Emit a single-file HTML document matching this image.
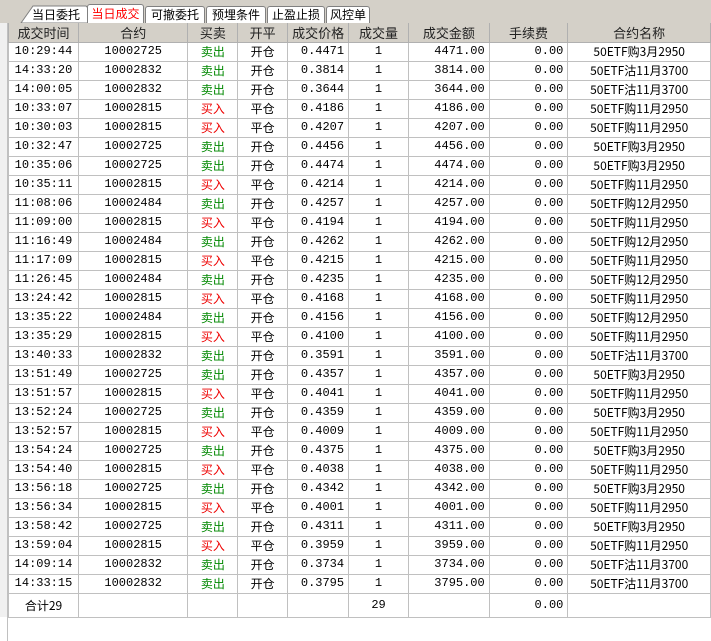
<!DOCTYPE html>
<html><head><meta charset="utf-8">
<style>
*{margin:0;padding:0;box-sizing:border-box}
body{width:711px;height:641px;overflow:hidden;background:#fff;position:relative;font-family:"Liberation Mono","Noto Sans CJK SC",monospace;font-size:12px;color:#000}
#top{position:absolute;left:0;top:0;width:711px;height:23px;background:#d4d0c8}
.tab{position:absolute;top:6px;height:17px;background:#fff;border:1px solid #808080;border-bottom:none;border-radius:3px 3px 0 0;font-family:"Noto Sans CJK SC",sans-serif;font-size:12px;line-height:15px;text-align:center}
.tab.act{top:4px;height:20px;color:#f00;line-height:18px}
#strip{position:absolute;left:0;top:23px;width:8px;height:594px;background:#f0f0f0;border-right:1px solid #c0c0c0}
#bl{position:absolute;left:7px;top:617px;width:1px;height:24px;background:#c0c0c0}
table{position:absolute;left:8px;top:23px;border-collapse:collapse;table-layout:fixed}
td,th{border:1px solid #c0c0c0;height:19px;padding:0 4px;white-space:nowrap;overflow:hidden;font-weight:normal;line-height:17px}
th{background:#d4d0c8;border-color:#b0b0b0;font-family:"Noto Sans CJK SC",sans-serif;font-size:13px;color:#222;text-align:center;border-top:none}
td{text-align:center}
td.r{text-align:right}
.g{color:#080;font-family:"Noto Sans CJK SC",sans-serif}
.red{color:#e00;font-family:"Noto Sans CJK SC",sans-serif}
.c{font-family:"Noto Sans CJK SC",sans-serif}
tr.tot td{height:24px}
</style></head><body>
<div id="top"></div>
<svg style="position:absolute;left:20px;top:5px" width="70" height="19"><polygon points="1,18 13,1 66,1 68,3 68,18" fill="#fff" stroke="#808080"/></svg>
<div style="position:absolute;left:32px;top:7px;font-family:'Noto Sans CJK SC',sans-serif;line-height:15px">当日委托</div>
<div class="tab act" style="left:87px;width:57px">当日成交</div>
<div class="tab" style="left:145px;width:60px">可撤委托</div>
<div class="tab" style="left:206px;width:60px">预埋条件</div>
<div class="tab" style="left:267px;width:58px">止盈止损</div>
<div class="tab" style="left:326px;width:44px">风控单</div>
<div id="strip"></div>
<div id="bl"></div>
<table>
<colgroup><col style="width:70px"><col style="width:110px"><col style="width:50px"><col style="width:50px"><col style="width:60px"><col style="width:60px"><col style="width:81px"><col style="width:79px"><col style="width:143px"></colgroup>
<tr><th>成交时间</th><th>合约</th><th>买卖</th><th>开平</th><th>成交价格</th><th>成交量</th><th>成交金额</th><th>手续费</th><th>合约名称</th></tr>
<tr><td>10:29:44</td><td>10002725</td><td class="g">卖出</td><td class="c">开仓</td><td class="r">0.4471</td><td>1</td><td class="r">4471.00</td><td class="r">0.00</td><td class="c">50ETF购3月2950</td></tr>
<tr><td>14:33:20</td><td>10002832</td><td class="g">卖出</td><td class="c">开仓</td><td class="r">0.3814</td><td>1</td><td class="r">3814.00</td><td class="r">0.00</td><td class="c">50ETF沽11月3700</td></tr>
<tr><td>14:00:05</td><td>10002832</td><td class="g">卖出</td><td class="c">开仓</td><td class="r">0.3644</td><td>1</td><td class="r">3644.00</td><td class="r">0.00</td><td class="c">50ETF沽11月3700</td></tr>
<tr><td>10:33:07</td><td>10002815</td><td class="red">买入</td><td class="c">平仓</td><td class="r">0.4186</td><td>1</td><td class="r">4186.00</td><td class="r">0.00</td><td class="c">50ETF购11月2950</td></tr>
<tr><td>10:30:03</td><td>10002815</td><td class="red">买入</td><td class="c">平仓</td><td class="r">0.4207</td><td>1</td><td class="r">4207.00</td><td class="r">0.00</td><td class="c">50ETF购11月2950</td></tr>
<tr><td>10:32:47</td><td>10002725</td><td class="g">卖出</td><td class="c">开仓</td><td class="r">0.4456</td><td>1</td><td class="r">4456.00</td><td class="r">0.00</td><td class="c">50ETF购3月2950</td></tr>
<tr><td>10:35:06</td><td>10002725</td><td class="g">卖出</td><td class="c">开仓</td><td class="r">0.4474</td><td>1</td><td class="r">4474.00</td><td class="r">0.00</td><td class="c">50ETF购3月2950</td></tr>
<tr><td>10:35:11</td><td>10002815</td><td class="red">买入</td><td class="c">平仓</td><td class="r">0.4214</td><td>1</td><td class="r">4214.00</td><td class="r">0.00</td><td class="c">50ETF购11月2950</td></tr>
<tr><td>11:08:06</td><td>10002484</td><td class="g">卖出</td><td class="c">开仓</td><td class="r">0.4257</td><td>1</td><td class="r">4257.00</td><td class="r">0.00</td><td class="c">50ETF购12月2950</td></tr>
<tr><td>11:09:00</td><td>10002815</td><td class="red">买入</td><td class="c">平仓</td><td class="r">0.4194</td><td>1</td><td class="r">4194.00</td><td class="r">0.00</td><td class="c">50ETF购11月2950</td></tr>
<tr><td>11:16:49</td><td>10002484</td><td class="g">卖出</td><td class="c">开仓</td><td class="r">0.4262</td><td>1</td><td class="r">4262.00</td><td class="r">0.00</td><td class="c">50ETF购12月2950</td></tr>
<tr><td>11:17:09</td><td>10002815</td><td class="red">买入</td><td class="c">平仓</td><td class="r">0.4215</td><td>1</td><td class="r">4215.00</td><td class="r">0.00</td><td class="c">50ETF购11月2950</td></tr>
<tr><td>11:26:45</td><td>10002484</td><td class="g">卖出</td><td class="c">开仓</td><td class="r">0.4235</td><td>1</td><td class="r">4235.00</td><td class="r">0.00</td><td class="c">50ETF购12月2950</td></tr>
<tr><td>13:24:42</td><td>10002815</td><td class="red">买入</td><td class="c">平仓</td><td class="r">0.4168</td><td>1</td><td class="r">4168.00</td><td class="r">0.00</td><td class="c">50ETF购11月2950</td></tr>
<tr><td>13:35:22</td><td>10002484</td><td class="g">卖出</td><td class="c">开仓</td><td class="r">0.4156</td><td>1</td><td class="r">4156.00</td><td class="r">0.00</td><td class="c">50ETF购12月2950</td></tr>
<tr><td>13:35:29</td><td>10002815</td><td class="red">买入</td><td class="c">平仓</td><td class="r">0.4100</td><td>1</td><td class="r">4100.00</td><td class="r">0.00</td><td class="c">50ETF购11月2950</td></tr>
<tr><td>13:40:33</td><td>10002832</td><td class="g">卖出</td><td class="c">开仓</td><td class="r">0.3591</td><td>1</td><td class="r">3591.00</td><td class="r">0.00</td><td class="c">50ETF沽11月3700</td></tr>
<tr><td>13:51:49</td><td>10002725</td><td class="g">卖出</td><td class="c">开仓</td><td class="r">0.4357</td><td>1</td><td class="r">4357.00</td><td class="r">0.00</td><td class="c">50ETF购3月2950</td></tr>
<tr><td>13:51:57</td><td>10002815</td><td class="red">买入</td><td class="c">平仓</td><td class="r">0.4041</td><td>1</td><td class="r">4041.00</td><td class="r">0.00</td><td class="c">50ETF购11月2950</td></tr>
<tr><td>13:52:24</td><td>10002725</td><td class="g">卖出</td><td class="c">开仓</td><td class="r">0.4359</td><td>1</td><td class="r">4359.00</td><td class="r">0.00</td><td class="c">50ETF购3月2950</td></tr>
<tr><td>13:52:57</td><td>10002815</td><td class="red">买入</td><td class="c">平仓</td><td class="r">0.4009</td><td>1</td><td class="r">4009.00</td><td class="r">0.00</td><td class="c">50ETF购11月2950</td></tr>
<tr><td>13:54:24</td><td>10002725</td><td class="g">卖出</td><td class="c">开仓</td><td class="r">0.4375</td><td>1</td><td class="r">4375.00</td><td class="r">0.00</td><td class="c">50ETF购3月2950</td></tr>
<tr><td>13:54:40</td><td>10002815</td><td class="red">买入</td><td class="c">平仓</td><td class="r">0.4038</td><td>1</td><td class="r">4038.00</td><td class="r">0.00</td><td class="c">50ETF购11月2950</td></tr>
<tr><td>13:56:18</td><td>10002725</td><td class="g">卖出</td><td class="c">开仓</td><td class="r">0.4342</td><td>1</td><td class="r">4342.00</td><td class="r">0.00</td><td class="c">50ETF购3月2950</td></tr>
<tr><td>13:56:34</td><td>10002815</td><td class="red">买入</td><td class="c">平仓</td><td class="r">0.4001</td><td>1</td><td class="r">4001.00</td><td class="r">0.00</td><td class="c">50ETF购11月2950</td></tr>
<tr><td>13:58:42</td><td>10002725</td><td class="g">卖出</td><td class="c">开仓</td><td class="r">0.4311</td><td>1</td><td class="r">4311.00</td><td class="r">0.00</td><td class="c">50ETF购3月2950</td></tr>
<tr><td>13:59:04</td><td>10002815</td><td class="red">买入</td><td class="c">平仓</td><td class="r">0.3959</td><td>1</td><td class="r">3959.00</td><td class="r">0.00</td><td class="c">50ETF购11月2950</td></tr>
<tr><td>14:09:14</td><td>10002832</td><td class="g">卖出</td><td class="c">开仓</td><td class="r">0.3734</td><td>1</td><td class="r">3734.00</td><td class="r">0.00</td><td class="c">50ETF沽11月3700</td></tr>
<tr><td>14:33:15</td><td>10002832</td><td class="g">卖出</td><td class="c">开仓</td><td class="r">0.3795</td><td>1</td><td class="r">3795.00</td><td class="r">0.00</td><td class="c">50ETF沽11月3700</td></tr>
<tr class="tot"><td class="c">合计29</td><td></td><td></td><td></td><td></td><td>29</td><td></td><td class="r">0.00</td><td></td></tr>
</table>
</body></html>
